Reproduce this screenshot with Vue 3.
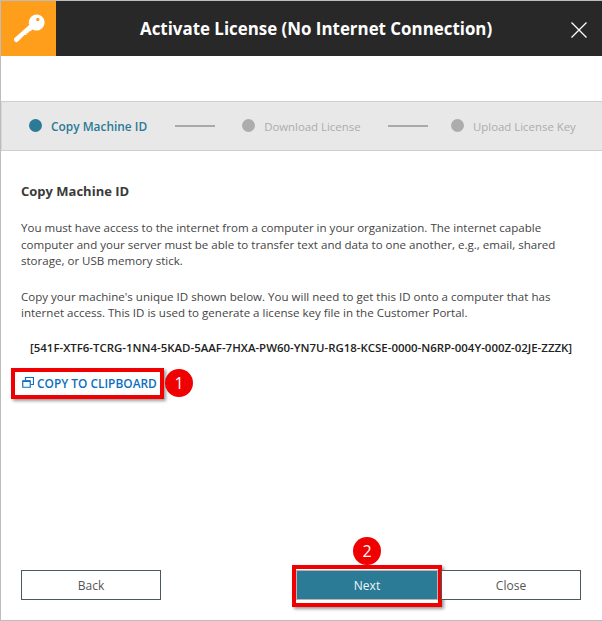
<template>
  <div class="win">
    <header class="head">
      <div class="keybox">
        <svg width="32" height="32" viewBox="0 0 32 32">
          <path fill="#fff" fill-rule="evenodd" d="M23.500 1.500A8 8 0 1 1 19.500 16.400L17 18.600 15.500 18.400 15.300 20.200H13.500L13.300 22 11.500 21.900 5 28.500 3 29.500 1 27.500V25.500L16.200 12A8 8 0 0 1 23.500 1.500ZM24.800 4.800a1.700 1.700 0 1 0 0 3.400 1.700 1.700 0 0 0 0-3.400Z"/>
        </svg>
      </div>
      <h1 class="title">Activate License (No Internet Connection)</h1>
      <svg class="x" width="16" height="16" viewBox="0 0 16 16">
        <path d="M.5.5l15 15M15.500.5l-15 15" stroke="#fff" stroke-width="1.300" fill="none"/>
      </svg>
    </header>

    <nav class="steps">
      <div class="step active"><i class="dot"></i><span>Copy Machine ID</span></div>
      <b class="line"></b>
      <div class="step"><i class="dot"></i><span>Download License</span></div>
      <b class="line second"></b>
      <div class="step"><i class="dot"></i><span>Upload License Key</span></div>
    </nav>

    <main class="body">
      <h2>Copy Machine ID</h2>
      <p class="p1">You must have access to the internet from a computer in your organization. The internet capable computer and your server must be able to transfer text and data to one another, e.g., email, shared storage, or USB memory stick.</p>
      <p class="p2">Copy your machine's unique ID shown below. You will need to get this ID onto a computer that has internet access. This ID is used to generate a license key file in the Customer Portal.</p>
      <div class="id">[541F-XTF6-TCRG-1NN4-5KAD-5AAF-7HXA-PW60-YN7U-RG18-KCSE-0000-N6RP-004Y-000Z-02JE-ZZZK]</div>
      <a class="copy">
        <svg width="12" height="11" viewBox="0 0 12 11">
          <path d="M.75 3.750h7.500v6.500H.75zM3.500 3V.5h8v7H9" fill="none" stroke="#0a6fc2" stroke-width="1.200"/>
          <path d="M1 3.500h7v1.500H1z" fill="#0a6fc2"/>
        </svg>
        COPY TO CLIPBOARD
        <span class="mark box1"></span>
        <span class="badge b1">1</span>
      </a>
    </main>

    <footer class="foot">
      <button class="btn">Back</button>
      <div class="right">
        <button class="btn primary">Next
          <span class="mark box2"></span>
          <span class="badge b2">2</span>
        </button>
        <button class="btn">Close</button>
      </div>
    </footer>
  </div>
</template>

<script setup>
</script>

<style>
html, body { margin: 0; background: #fff; }
</style>

<style scoped>
.win {
  width: 602px;
  height: 621px;
  box-sizing: border-box;
  border: solid #bdbdbd;
  border-width: 1px 0 1px 1px;
  display: flex;
  flex-direction: column;
  font-family: "Open Sans", "Noto Sans", sans-serif;
  color: #3c3c3c;
  overflow: hidden;
  background: #fff;
}
.head {
  height: 55px;
  flex: none;
  background: #282828;
  display: flex;
  align-items: center;
  position: relative;
}
.keybox {
  width: 55px;
  height: 55px;
  background: #ff9e1b;
  display: flex;
  align-items: center;
  justify-content: center;
}
.title {
  margin: 0 0 0 84px;
  font-size: 16.900px;
  font-weight: 700;
  color: #fff;
  white-space: nowrap;
}
.x { position: absolute; left: 570px; top: 21px; }
.steps {
  margin-top: 45px;
  height: 48px;
  flex: none;
  background: #e8e8e8;
  border: solid #cfcfcf;
  border-width: 1px 0;
  box-shadow: inset 1px 0 0 #d6d6d6;
  display: flex;
  align-items: center;
  padding-left: 28px;
  font-size: 11.400px;
}
.step { display: flex; align-items: center; color: #acacac; }
.dot {
  width: 13px;
  height: 13px;
  border-radius: 50%;
  background: #acacac;
  margin-right: 9px;
  margin-top: -2px;
}
.active { color: #2b7a96; font-weight: 600; font-size: 11.900px; }
.active .dot { background: #2b7a96; }
.line { width: 40px; height: 2px; background: #a9a9a9; margin: 0 27px 0 28px; }
.second { margin: 0 23px 0 27.500px; }
.body { padding: 0 20px; flex: 1; }
h2 { margin: 31px 0 0; font-size: 13px; line-height: 18px; font-weight: 700; color: #3a3a3a; }
p { margin: 0; font-size: 11.550px; line-height: 16.500px; color: #444; }
.p1 { margin-top: 20px; }
.p2 { margin-top: 19px; }
.id {
  margin: 18px 0 0 9px;
  font-size: 11.450px;
  line-height: 16px;
  font-weight: 600;
  color: #222;
  white-space: nowrap;
}
.copy {
  position: relative;
  display: inline-flex;
  align-items: center;
  gap: 3px;
  margin: 18px 0 0 1px;
  height: 18px;
  font-size: 11.900px;
  font-weight: 600;
  color: #0a6fc2;
  white-space: nowrap;
}
.mark {
  position: absolute;
  border: 4px solid #f00000;
  box-sizing: border-box;
  box-shadow: 2px 2px 3px rgba(0, 0, 0, 0.4);
}
.box1 { left: -11px; top: -6px; width: 153px; height: 31px; }
.badge {
  position: absolute;
  width: 28px;
  height: 28px;
  border-radius: 50%;
  background: #f00000;
  color: #fff;
  font-size: 16px;
  font-weight: 400;
  display: flex;
  align-items: center;
  justify-content: center;
}
.b1 { left: 143px; top: -5px; }
.foot {
  display: flex;
  justify-content: space-between;
  padding: 0 21px 20px 20px;
}
.right { display: flex; }
.btn {
  position: relative;
  width: 140px;
  height: 30px;
  box-sizing: border-box;
  border: 1px solid #4a5960;
  background: #fff;
  font: 12px "Open Sans", "Noto Sans", sans-serif;
  color: #555;
  padding: 0;
}
.primary {
  width: 142px;
  margin-right: 3px;
  background: #2b7a96;
  border: 1px solid #b5b5b5;
  color: #eef5f7;
}
.box2 { left: -5px; top: -6px; width: 150px; height: 42px; }
.b2 { left: 56px; top: -34px; }
</style>
